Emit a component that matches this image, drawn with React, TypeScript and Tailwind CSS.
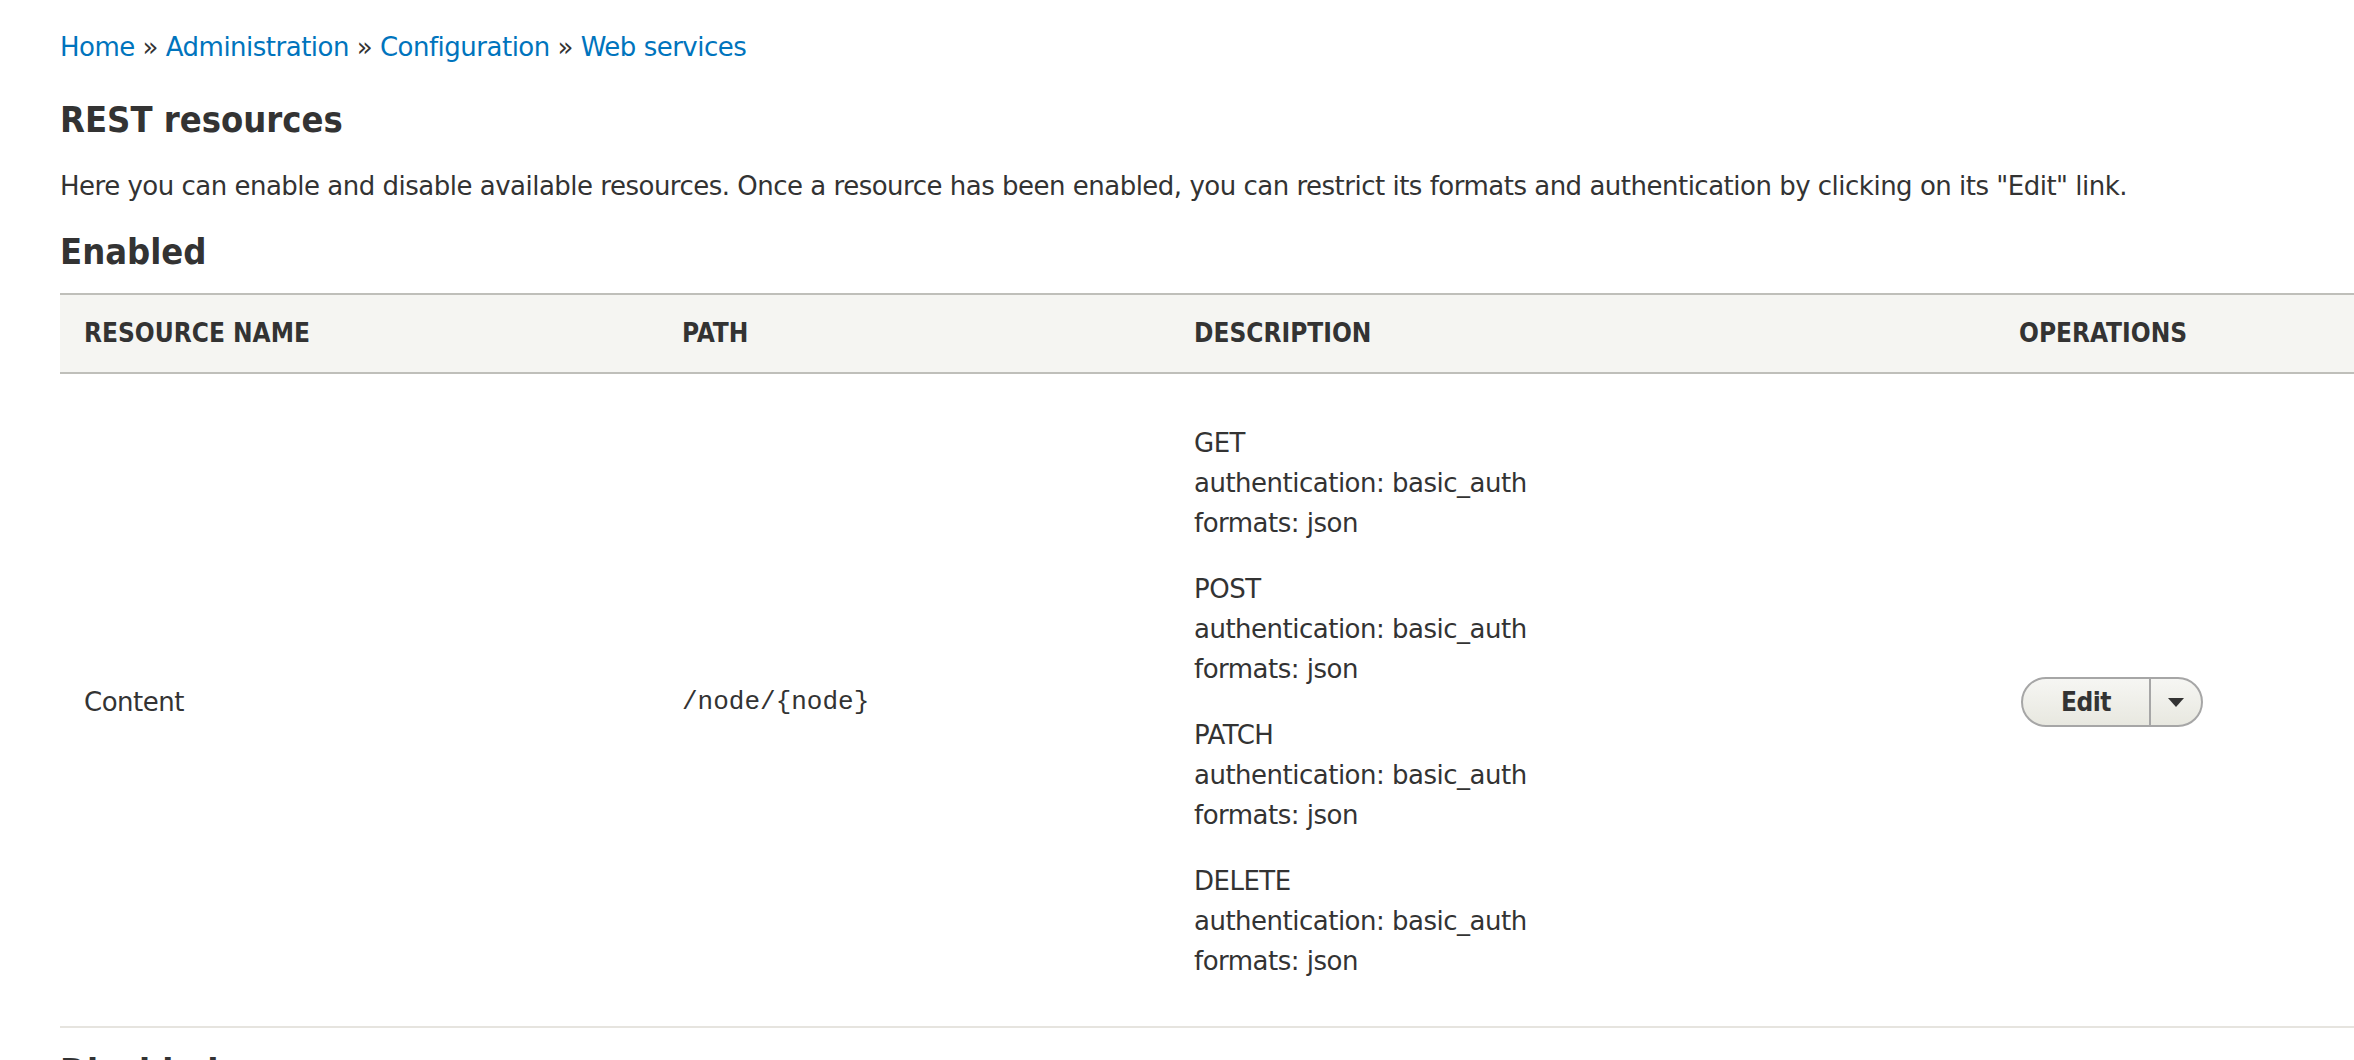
import { Fragment } from "react";

const body = "font-['DejaVu_Sans',sans-serif]";
const bold = "font-['DejaVu_Sans_Condensed','DejaVu_Sans',sans-serif] font-bold";

const crumbs = ["Home", "Administration", "Configuration", "Web services"];

const methods = ["GET", "POST", "PATCH", "DELETE"];

function EditButton() {
  return (
    <div className="flex h-[50px] w-[182px] items-stretch rounded-full border-2 border-[#a6a6a6] bg-gradient-to-b from-[#f6f6f3] to-[#e8e8e0]">
      <span className={`flex flex-1 items-center justify-center text-[26px] text-[#333] ${bold}`}>
        Edit
      </span>
      <span className="flex w-[52px] items-center justify-center border-l-2 border-[#a6a6a6]">
        <svg width="16" height="9" viewBox="0 0 16 9">
          <path d="M0 0h16L8 9z" fill="#333" />
        </svg>
      </span>
    </div>
  );
}

export default function App() {
  return (
    <div className={`min-h-screen bg-white pl-[60px] pt-[27px] text-[#333] ${body} tracking-[-0.5px]`}>
      {/* Breadcrumb */}
      <nav className="text-[26px] leading-[40px] text-[#0074bd]">
        {crumbs.map((c, i) => (
          <Fragment key={c}>
            {i > 0 && <span className="text-[#333]"> » </span>}
            <a href="#">{c}</a>
          </Fragment>
        ))}
      </nav>

      <h1 className={`mt-[31px] text-[36px] leading-[44px] tracking-normal ${bold}`}>REST resources</h1>

      <p className="mt-[24px] text-[26px] leading-[40px]">
        Here you can enable and disable available resources. Once a resource has been enabled, you can restrict its formats and authentication by clicking on its "Edit" link.
      </p>

      <h2 className={`mt-[24px] text-[36px] leading-[44px] tracking-normal ${bold}`}>Enabled</h2>

      {/* Enabled table */}
      <div className="mt-[19px]">
        <div className={`grid h-[81px] grid-cols-[598px_512px_825px_1fr] items-center border-y-2 border-[#bfbfba] bg-[#f5f5f2] text-[26px] uppercase tracking-normal ${bold}`}>
          <div className="pl-[24px]">Resource name</div>
          <div className="pl-[24px]">Path</div>
          <div className="pl-[24px]">Description</div>
          <div className="pl-[24px]">Operations</div>
        </div>

        <div className="grid grid-cols-[598px_512px_825px_1fr] items-center border-b-2 border-[#e6e4df] pb-[45px] pt-[49px] text-[26px] leading-[40px]">
          <div className="pl-[24px]">Content</div>
          <div className="pl-[24px] font-['Liberation_Mono',monospace] tracking-normal">/node/{"{node}"}</div>
          <div className="flex flex-col gap-[26px] pl-[24px]">
            {methods.map((m) => (
              <div key={m}>
                <div>{m}</div>
                <div>authentication: basic_auth</div>
                <div>formats: json</div>
              </div>
            ))}
          </div>
          <div className="pl-[26px]">
            <EditButton />
          </div>
        </div>
      </div>

      <h2 className={`mt-[22px] text-[36px] leading-[44px] tracking-normal ${bold}`}>Disabled</h2>
    </div>
  );
}
